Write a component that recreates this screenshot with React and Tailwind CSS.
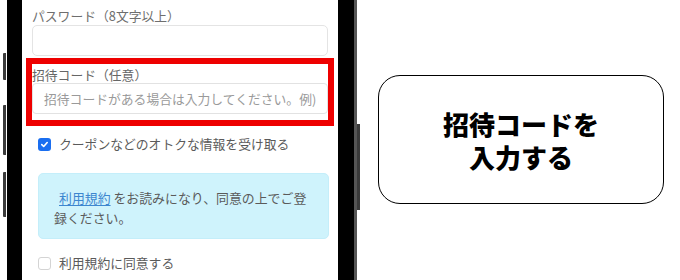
import React from "react";

export default function App() {
  return (
    <div className="w-[680px] h-[280px] bg-white flex overflow-hidden font-['Noto_Sans_CJK_JP','Noto_Sans',sans-serif]">
      {/* phone */}
      <div className="w-[360px] h-[280px] flex shrink-0">
        <div className="w-[7px] flex flex-col">
          <div className="ml-[3px] w-[3px] h-[27px] mt-[53px] bg-[#3a3a3a] rounded-l-[1px]" />
          <div className="ml-[3px] w-[3px] h-[50px] mt-[25px] bg-[#3a3a3a] rounded-l-[1px]" />
          <div className="ml-[3px] w-[3px] h-[45px] mt-[17px] bg-[#3a3a3a] rounded-l-[1px]" />
        </div>
        <div className="w-[15px] bg-black" />
        <div className="w-[316px] bg-white px-[10px] flex flex-col">
          <div className="mt-[7px] h-[18px] leading-[18px] text-[12.8px] text-[#6e6e6e] whitespace-nowrap">
            パスワード（8文字以上）
          </div>
          <div className="h-[31px] rounded-[5px] border border-[#e4e4e4]" />
          <div className="mt-[2px] -mx-[6px] border-[6px] border-[#ee0000] px-0">
            <div className="pt-[3px] h-[19px] leading-[16px] text-[12.8px] text-[#666] whitespace-nowrap overflow-hidden">
              招待コード（任意）
            </div>
            <div className="h-[31px] rounded-[4px] border border-[#e2e2e2] pl-[11px] flex items-center text-[12.8px] text-[#9a9a9a] whitespace-nowrap overflow-hidden">
              招待コードがある場合は入力してください。例)
            </div>
            <div className="h-[6px]" />
          </div>
          <div className="mt-[9px] h-[18px] flex items-center">
            <div className="ml-[6px] w-[13px] h-[13px] rounded-[3px] bg-[#1a6ef0] flex items-center justify-center">
              <svg width="9" height="9" viewBox="0 0 10 10">
                <path d="M2 5.2 L4.1 7.2 L8 2.8" fill="none" stroke="white" strokeWidth="1.8" strokeLinecap="round" strokeLinejoin="round" />
              </svg>
            </div>
            <span className="ml-[8px] text-[12.8px] leading-[18px] text-[#5a5a5a] whitespace-nowrap">
              クーポンなどのオトクな情報を受け取る
            </span>
          </div>
          <div className="mt-[20px] ml-[6px] w-[291px] rounded-[5px] border border-[#c4eefa] bg-[#cff3fc] pl-[15px] pr-[12px] pt-[14px] pb-[10px] text-[12.9px] leading-[20px] text-[#5a5a5a]">
            <span className="ml-[5px] text-[#3d86cf] underline underline-offset-2">利用規約</span>
            {" "}をお読みになり、同意の上でご登録ください。
          </div>
          <div className="mt-[15px] h-[18px] flex items-center">
            <div className="ml-[6px] w-[13px] h-[13px] rounded-[3px] bg-white border border-[#d4d4d4]" />
            <span className="ml-[8px] text-[12.8px] leading-[18px] text-[#5a5a5a] whitespace-nowrap">
              利用規約に同意する
            </span>
          </div>
        </div>
        <div className="w-[16px] bg-black" />
        <div className="w-[3px] bg-[#555]" />
        <div className="w-[3px] flex flex-col">
          <div className="mt-[124px] w-[3px] h-[86px] bg-[#3a3a3a]" />
        </div>
      </div>
      {/* right */}
      <div className="flex-1">
        <div className="ml-[18px] mt-[75px] w-[286px] h-[129px] rounded-[22px] border-[1.5px] border-black flex flex-col items-center justify-center">
          <div className="text-[26px] leading-[33px] font-black text-black text-center">招待コードを</div>
          <div className="text-[26px] leading-[33px] font-black text-black text-center">入力する</div>
        </div>
      </div>
    </div>
  );
}
